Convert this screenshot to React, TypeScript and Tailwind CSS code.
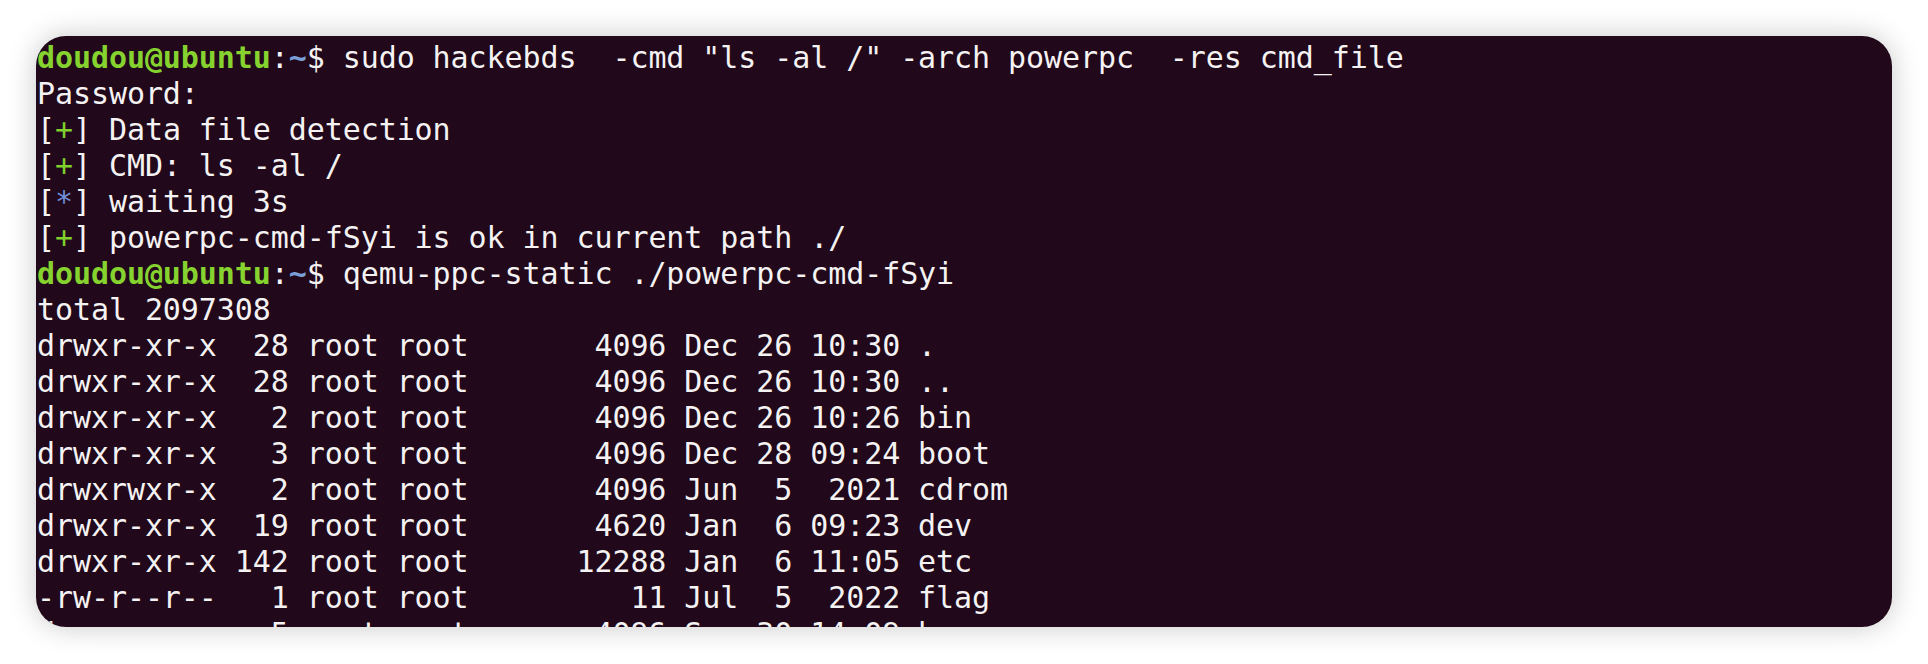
const green = 'text-[#86d22f] font-bold'
const blue = 'text-[#7a9fd6]'

const Prompt = ({ cmd }: { cmd: string }) => (
  <div>
    <span className={green}>doudou@ubuntu</span>
    <span>:</span>
    <span className={`${blue} font-bold`}>~</span>
    <span>$ {cmd}</span>
  </div>
)

const Status = ({ mark, text }: { mark: '+' | '*'; text: string }) => (
  <div>
    [<span className={mark === '+' ? 'text-[#7fd02c]' : 'text-[#6f8fd6]'}>{mark}</span>] {text}
  </div>
)

const listing = [
  'drwxr-xr-x  28 root root       4096 Dec 26 10:30 .',
  'drwxr-xr-x  28 root root       4096 Dec 26 10:30 ..',
  'drwxr-xr-x   2 root root       4096 Dec 26 10:26 bin',
  'drwxr-xr-x   3 root root       4096 Dec 28 09:24 boot',
  'drwxrwxr-x   2 root root       4096 Jun  5  2021 cdrom',
  'drwxr-xr-x  19 root root       4620 Jan  6 09:23 dev',
  'drwxr-xr-x 142 root root      12288 Jan  6 11:05 etc',
  '-rw-r--r--   1 root root         11 Jul  5  2022 flag',
  'drwxr-xr-x   5 root root       4096 Sep 30 14:09 home',
]

export default function App() {
  return (
    <div className="w-full h-[664px] bg-white pt-[36px] pl-[36px]">
      {/* terminal window */}
      <div className="w-[1856px] h-[591px] rounded-[30px] bg-[#21081a] overflow-hidden shadow-[0_0_28px_rgba(0,0,0,0.22)]">
        <div className="pt-[4px] pl-[1px] text-[30px] leading-[36px] text-[#f4f2f2] whitespace-pre font-['DejaVu_Sans_Mono',monospace] tracking-[-0.08px]">
          <Prompt cmd={'sudo hackebds  -cmd "ls -al /" -arch powerpc  -res cmd_file'} />
          <div>Password:</div>
          <Status mark="+" text="Data file detection" />
          <Status mark="+" text="CMD: ls -al /" />
          <Status mark="*" text="waiting 3s" />
          <Status mark="+" text="powerpc-cmd-fSyi is ok in current path ./" />
          <Prompt cmd="qemu-ppc-static ./powerpc-cmd-fSyi" />
          <div>total 2097308</div>
          {listing.map((row) => (
            <div key={row}>{row}</div>
          ))}
        </div>
      </div>
    </div>
  )
}
